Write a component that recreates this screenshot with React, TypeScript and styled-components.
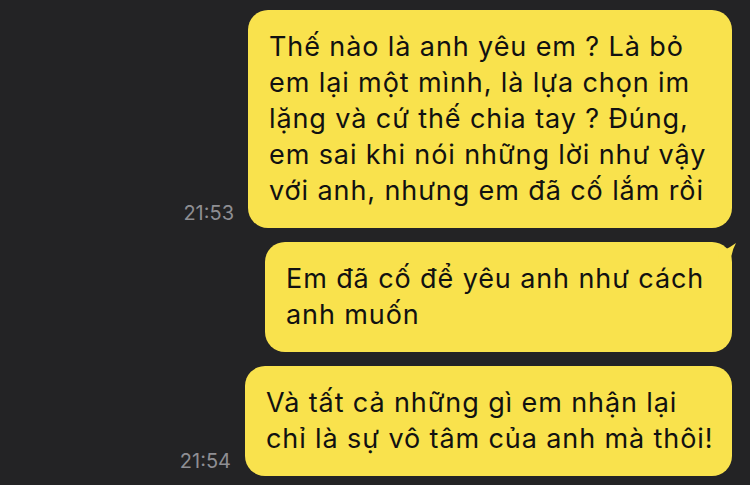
import React from 'react';
import styled, { createGlobalStyle } from 'styled-components';

interface Message {
  id: string;
  lines: string[];
  time?: string;
  width: number;
  tail?: boolean;
}

const messages: Message[] = [
  {
    id: 'm1',
    lines: [
      'Thế nào là anh yêu em ? Là bỏ',
      'em lại một mình, là lựa chọn im',
      'lặng và cứ thế chia tay ? Đúng,',
      'em sai khi nói những lời như vậy',
      'với anh, nhưng em đã cố lắm rồi',
    ],
    time: '21:53',
    width: 484,
  },
  {
    id: 'm2',
    lines: ['Em đã cố để yêu anh như cách', 'anh muốn'],
    width: 467,
    tail: true,
  },
  {
    id: 'm3',
    lines: ['Và tất cả những gì em nhận lại', 'chỉ là sự vô tâm của anh mà thôi!'],
    time: '21:54',
    width: 487,
  },
];

const GlobalStyle = createGlobalStyle`
  html, body {
    margin: 0;
    padding: 0;
    background: #232325;
  }
  body {
    font-family: Inter, "Noto Sans", sans-serif;
  }
`;

export default function App() {
  return (
    <>
      <GlobalStyle />
      <Chat>
        {messages.map((m) => (
          <Row key={m.id}>
            {m.time && <Time>{m.time}</Time>}
            <Bubble $width={m.width}>
              {m.lines.map((line, i) => (
                <Line key={i}>{line}</Line>
              ))}
              {m.tail && (
                <Tail viewBox="0 0 27 27" width={27} height={27}>
                  <path d="M7 4 Q14 9 19 5 L25 1 Q21 8 20 17 L8 17 Z" fill="#f9e24d" />
                </Tail>
              )}
            </Bubble>
          </Row>
        ))}
      </Chat>
    </>
  );
}

const Chat = styled.div`
  width: 750px;
  height: 485px;
  box-sizing: border-box;
  padding: 10px 18px 0 0;
  display: flex;
  flex-direction: column;
  gap: 14px;
  overflow: hidden;
`;

const Row = styled.div`
  display: flex;
  justify-content: flex-end;
  align-items: flex-end;
  gap: 14px;
`;

const Time = styled.div`
  color: #8e8e93;
  font-size: 20px;
  line-height: 20px;
  margin-bottom: 5px;
`;

const Bubble = styled.div<{ $width: number }>`
  position: relative;
  width: ${(p) => p.$width}px;
  box-sizing: border-box;
  padding: 19px 20px 19px 21px;
  background: #f9e24d;
  border-radius: 20px;
  color: #111111;
  font-size: 27px;
  line-height: 36px;
  letter-spacing: 0.9px;
`;

const Line = styled.div`
  white-space: nowrap;
`;

const Tail = styled.svg`
  position: absolute;
  top: 0;
  right: -6px;
  display: block;
`;
